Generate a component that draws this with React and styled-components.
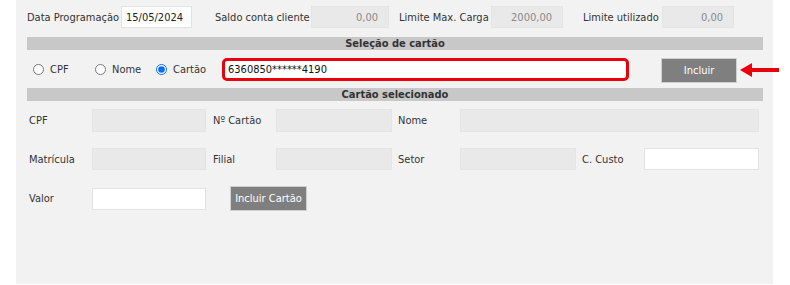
import React from "react";
import styled, { createGlobalStyle } from "styled-components";

const GlobalStyle = createGlobalStyle`
  html, body {
    margin: 0;
    padding: 0;
    background: #ffffff;
  }
  body {
    font-family: "DejaVu Sans Condensed", "DejaVu Sans", Verdana, sans-serif;
    font-stretch: condensed;
    font-size: 11px;
    color: #333333;
  }
`;

const Panel = styled.div`
  margin-left: 16px;
  width: 757px;
  height: 284px;
  background: #f2f2f2;
  padding: 6px 10px 0 11px;
  box-sizing: border-box;
`;

const TopRow = styled.div`
  display: flex;
  align-items: center;
  height: 22px;
`;

const Label = styled.span`
  width: ${(p) => (p.$w ? `${p.$w}px` : "auto")};
  margin-left: ${(p) => p.$ml || 0}px;
  flex-shrink: 0;
  white-space: nowrap;
  color: #333333;
`;

const Field = styled.input`
  box-sizing: border-box;
  flex-shrink: 0;
  width: ${(p) => p.$w}px;
  height: ${(p) => p.$h || 22}px;
  margin: 0;
  padding: ${(p) => (p.$right ? "0 10px 0 4px" : "0 4px")};
  font: inherit;
  color: ${(p) => (p.disabled ? "#8a8a8a" : "#222222")};
  text-align: ${(p) => (p.$right ? "right" : "left")};
  background: ${(p) => (p.disabled ? "#e9e9e9" : "#ffffff")};
  border: 1px solid ${(p) => (p.disabled ? "#e4e4e4" : "#e2e2e2")};
  outline: none;
`;

const SectionBar = styled.div`
  margin-top: ${(p) => p.$mt}px;
  width: 736px;
  height: 13px;
  line-height: 13px;
  background: #c8c8c8;
  text-align: center;
  font-weight: bold;
  color: #333333;
`;

const SelectRow = styled.div`
  display: flex;
  align-items: center;
  height: 38px;
  padding-left: 6px;
`;

const RadioOption = styled.label`
  display: flex;
  align-items: center;
  gap: 6px;
  width: ${(p) => p.$w}px;
  flex-shrink: 0;
`;

const Radio = styled.input`
  margin: 0;
  width: 11px;
  height: 11px;
  accent-color: #0a6cf0;
`;

const CardInput = styled.input`
  box-sizing: border-box;
  flex-shrink: 0;
  width: 407px;
  height: 23px;
  margin: 0 0 0 -6px;
  padding: 0 3px;
  font: inherit;
  color: #111111;
  background: #ffffff;
  border: 3px solid #e8000b;
  border-radius: 5px;
  outline: none;
`;

const GrayButton = styled.button`
  box-sizing: border-box;
  flex-shrink: 0;
  width: ${(p) => p.$w}px;
  height: ${(p) => p.$h}px;
  margin: ${(p) => p.$mt || 0}px 0 0 ${(p) => p.$ml || 0}px;
  padding: 0;
  font: inherit;
  color: #ffffff;
  background: #7f7f7f;
  border: 1px solid #d0d0d0;
  cursor: pointer;
`;

const Arrow = styled.svg`
  margin: 2px 0 0 2px;
  flex-shrink: 0;
`;

const FormGrid = styled.div`
  display: grid;
  grid-template-columns: 63px 121px 63px 122px 62px 122px 62px 115px;
  row-gap: 16px;
  align-items: center;
  padding: 8px 0 0 2px;
`;

const Cell = styled.div`
  grid-column: ${(p) => p.$span || "auto"};
  display: flex;
  align-items: center;
`;

export default function App() {
  return (
    <>
      <GlobalStyle />
      <Panel>
        <TopRow>
          <Label $w={94}>Data Programação</Label>
          <Field $w={71} defaultValue="15/05/2024" />
          <Label $w={96} $ml={23}>Saldo conta cliente</Label>
          <Field $w={78} disabled $right defaultValue="0,00" />
          <Label $w={92} $ml={10}>Limite Max. Carga</Label>
          <Field $w={72} disabled $right defaultValue="2000,00" />
          <Label $w={79} $ml={20}>Limite utilizado</Label>
          <Field $w={72} disabled $right defaultValue="0,00" />
        </TopRow>

        <SectionBar $mt={9}>Seleção de cartão</SectionBar>
        <SelectRow>
          <RadioOption $w={62}>
            <Radio type="radio" name="tipo" />
            CPF
          </RadioOption>
          <RadioOption $w={61}>
            <Radio type="radio" name="tipo" />
            Nome
          </RadioOption>
          <RadioOption $w={72}>
            <Radio type="radio" name="tipo" defaultChecked />
            Cartão
          </RadioOption>
          <CardInput defaultValue="6360850******4190" />
          <GrayButton $w={76} $h={25} $ml={32} $mt={2}>Incluir</GrayButton>
          <Arrow width="40" height="16" viewBox="0 0 40 16">
            <polygon points="1,8 13,1 13,6 40,6 40,10 13,10 13,15" fill="#e8000b" />
          </Arrow>
        </SelectRow>
        <SectionBar $mt={0}>Cartão selecionado</SectionBar>

        <FormGrid>
          <Label>CPF</Label>
          <Cell><Field $w={114} $h={23} disabled /></Cell>
          <Label>Nº Cartão</Label>
          <Cell><Field $w={116} $h={23} disabled /></Cell>
          <Label>Nome</Label>
          <Cell $span="span 3"><Field $w={299} $h={23} disabled /></Cell>

          <Label>Matrícula</Label>
          <Cell><Field $w={114} $h={22} disabled /></Cell>
          <Label>Filial</Label>
          <Cell><Field $w={116} $h={22} disabled /></Cell>
          <Label>Setor</Label>
          <Cell><Field $w={116} $h={22} disabled /></Cell>
          <Label>C. Custo</Label>
          <Cell><Field $w={115} $h={22} /></Cell>

          <Label>Valor</Label>
          <Cell><Field $w={114} $h={22} /></Cell>
          <Cell $span="span 2">
            <GrayButton $w={77} $h={25} $ml={17}>Incluir Cartão</GrayButton>
          </Cell>
        </FormGrid>
      </Panel>
    </>
  );
}
